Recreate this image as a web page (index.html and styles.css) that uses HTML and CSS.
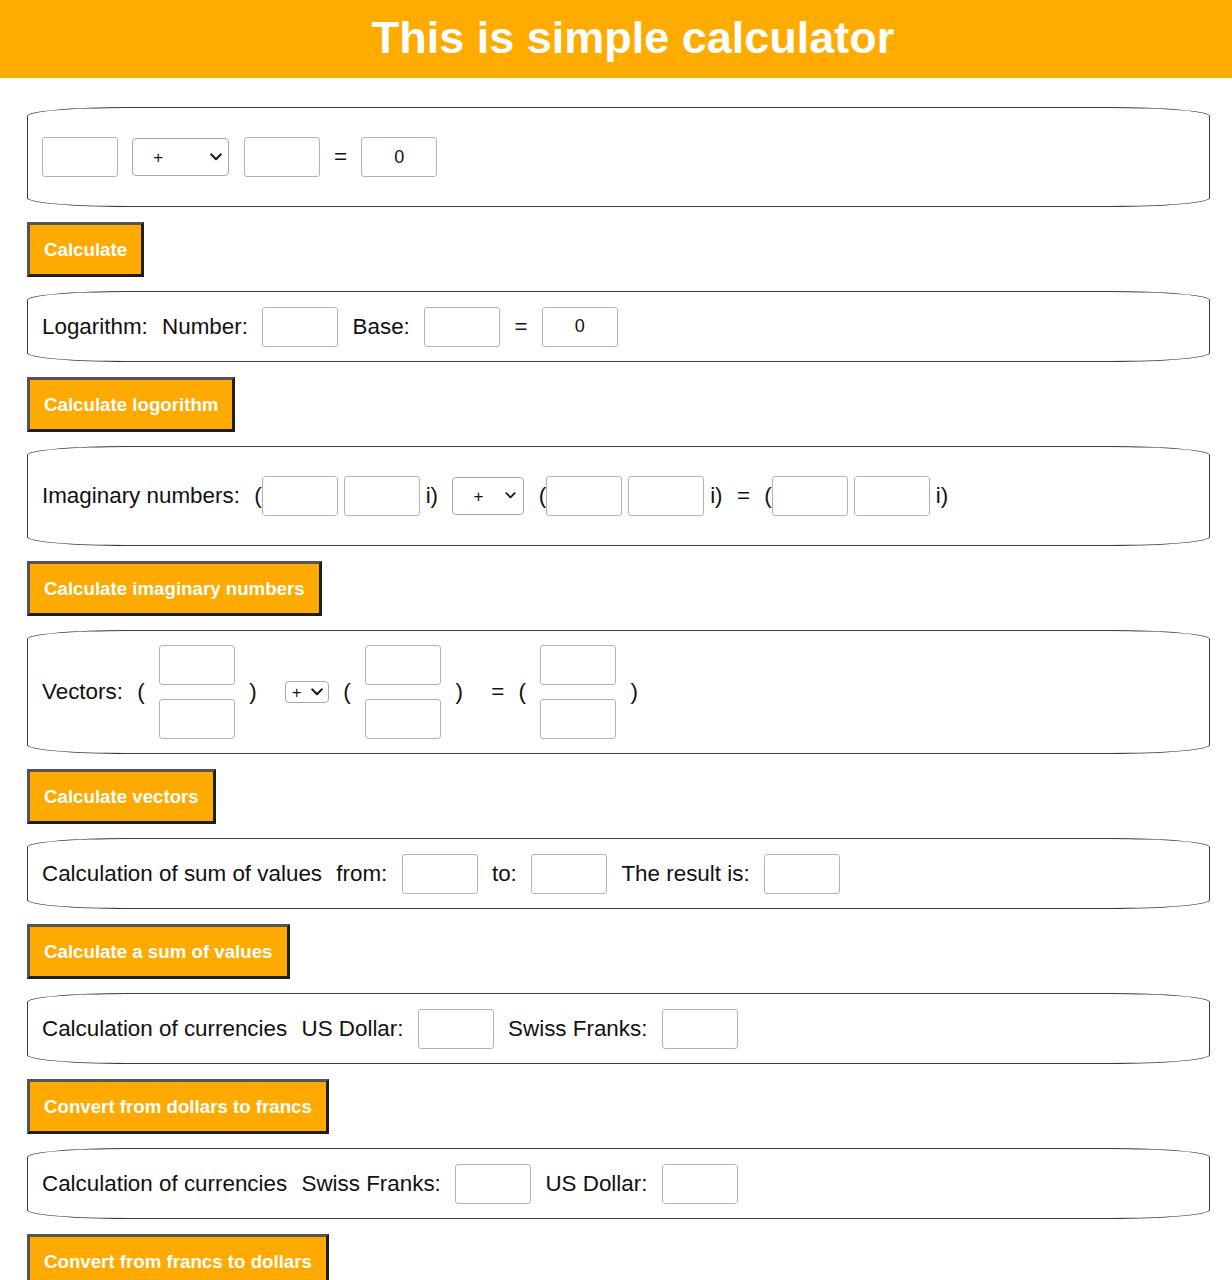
FILE: index.html
```html
<!DOCTYPE html>
<html lang="en">
<head>
<meta charset="utf-8">
<title>This is simple calculator</title>
<link rel="stylesheet" href="styles.css">
</head>
<body>
<header class="top">
  <h1 class="title">This is simple calculator</h1>
</header>
<main class="page">
  <div class="panel panel-tall">
    <input class="field" type="text">
    <span class="sel sel-wide">
      <select class="op"><option>+</option><option>-</option><option>*</option><option>/</option></select>
      <svg class="chev" viewBox="0 0 12 8" aria-hidden="true"><path d="M1.2 1.4 L6 6.2 L10.8 1.4" fill="none" stroke="#111" stroke-width="2" stroke-linecap="round" stroke-linejoin="round"/></svg>
    </span>
    <input class="field" type="text">
    <span class="sym">=</span>
    <input class="field" type="text" value="0">
  </div>
  <button class="btn" type="button">Calculate</button>

  <div class="panel">
    <span>Logarithm:</span>
    <span>Number:</span>
    <input class="field" type="text">
    <span>Base:</span>
    <input class="field" type="text">
    <span class="sym">=</span>
    <input class="field" type="text" value="0">
  </div>
  <button class="btn" type="button">Calculate logorithm</button>

  <div class="panel panel-tall">
    <span class="label-wide">Imaginary numbers:</span>
    <span class="cplx"><span>(</span><input class="field" type="text"><input class="field" type="text"><span>i)</span></span>
    <span class="sel sel-mid">
      <select class="op"><option>+</option><option>-</option><option>*</option><option>/</option></select>
      <svg class="chev" viewBox="0 0 12 8" aria-hidden="true"><path d="M1.2 1.4 L6 6.2 L10.8 1.4" fill="none" stroke="#111" stroke-width="2" stroke-linecap="round" stroke-linejoin="round"/></svg>
    </span>
    <span class="cplx"><span>(</span><input class="field" type="text"><input class="field" type="text"><span>i)</span></span>
    <span class="sym">=</span>
    <span class="cplx"><span>(</span><input class="field" type="text"><input class="field" type="text"><span>i)</span></span>
  </div>
  <button class="btn" type="button">Calculate imaginary numbers</button>

  <div class="panel panel-vec">
    <span>Vectors:</span>
    <span>(</span>
    <span class="stack"><input class="field" type="text"><input class="field" type="text"></span>
    <span class="close">)</span>
    <span class="sel sel-small">
      <select class="op"><option>+</option><option>-</option></select>
      <svg class="chev" viewBox="0 0 12 8" aria-hidden="true"><path d="M1.2 1.4 L6 6.2 L10.8 1.4" fill="none" stroke="#111" stroke-width="2" stroke-linecap="round" stroke-linejoin="round"/></svg>
    </span>
    <span>(</span>
    <span class="stack"><input class="field" type="text"><input class="field" type="text"></span>
    <span class="close">)</span>
    <span class="sym">=</span>
    <span>(</span>
    <span class="stack"><input class="field" type="text"><input class="field" type="text"></span>
    <span>)</span>
  </div>
  <button class="btn" type="button">Calculate vectors</button>

  <div class="panel">
    <span>Calculation of sum of values</span>
    <span>from:</span>
    <input class="field" type="text">
    <span>to:</span>
    <input class="field" type="text">
    <span>The result is:</span>
    <input class="field" type="text">
  </div>
  <button class="btn" type="button">Calculate a sum of values</button>

  <div class="panel">
    <span>Calculation of currencies</span>
    <span>US Dollar:</span>
    <input class="field" type="text">
    <span>Swiss Franks:</span>
    <input class="field" type="text">
  </div>
  <button class="btn" type="button">Convert from dollars to francs</button>

  <div class="panel">
    <span>Calculation of currencies</span>
    <span>Swiss Franks:</span>
    <input class="field" type="text">
    <span>US Dollar:</span>
    <input class="field" type="text">
  </div>
  <button class="btn" type="button">Convert from francs to dollars</button>
</main>
</body>
</html>
```
FILE: styles.css
```css
html, body {
  margin: 0;
  padding: 0;
  background: #ffffff;
}

body {
  font-family: "Liberation Sans", Arial, sans-serif;
  color: #111111;
}

.top {
  background: #ffab00;
  height: 78px;
}

.title {
  margin: 0;
  padding-left: 34px;
  text-align: center;
  color: #ffffff;
  font-size: 45px;
  font-weight: bold;
  line-height: 76px;
}

.page {
  display: flex;
  flex-direction: column;
  align-items: flex-start;
  gap: 14.5px;
  padding: 29px 22px 40px 27px;
}

.panel {
  box-sizing: border-box;
  width: 100%;
  display: flex;
  align-items: center;
  gap: 14.3px;
  padding: 14.5px 14px;
  border: 1px solid #3a3a3a;
  border-radius: 100px / 9px;
  font-size: 22.4px;
  line-height: 26px;
}

.panel-tall {
  padding-top: 29px;
  padding-bottom: 29px;
}

.panel-vec {
  padding-top: 14px;
  padding-bottom: 14px;
}

.field {
  box-sizing: border-box;
  width: 76px;
  height: 40px;
  margin: 0;
  padding: 0 4px;
  border: 1px solid #b4b4b4;
  border-radius: 3px;
  background: #ffffff;
  font-family: "Liberation Sans", Arial, sans-serif;
  font-size: 18px;
  color: #111111;
  text-align: center;
}

.sym {
  display: inline-block;
}

.sel {
  position: relative;
  display: inline-flex;
}

.op {
  -webkit-appearance: none;
  appearance: none;
  box-sizing: border-box;
  width: 100%;
  height: 100%;
  margin: 0;
  border: 1px solid #a8a8a8;
  border-radius: 4px;
  background: #ffffff;
  font-family: "Liberation Sans", Arial, sans-serif;
  font-size: 17px;
  color: #111111;
}

.chev {
  position: absolute;
  pointer-events: none;
  width: 12px;
  height: 8px;
}

.sel-wide {
  width: 97px;
  height: 38px;
}

.sel-wide .op {
  padding: 0 0 0 20px;
}

.sel-wide .chev {
  right: 7px;
  top: 15px;
}

.sel-mid {
  width: 72px;
  height: 38px;
}

.sel-mid .op {
  padding: 0 0 0 20px;
}

.sel-mid .chev {
  right: 8px;
  width: 11px;
  height: 7px;
  top: 15px;
}

.sel-small {
  width: 44px;
  height: 22px;
}

.sel-small .op {
  padding: 0 0 0 6px;
  font-size: 16px;
}

.sel-small .chev {
  right: 6px;
  top: 7px;
  width: 12px;
  height: 8px;
}

.cplx {
  display: flex;
  align-items: center;
  gap: 6px;
}

.cplx > span:first-child {
  margin-right: -6px;
}

.stack {
  display: flex;
  flex-direction: column;
  gap: 14px;
}

.close {
  margin-right: 14px;
}

.btn {
  margin: 0;
  padding: 14px 14px;
  background: #ffaa00;
  color: #ffffff;
  font-family: "Liberation Sans", Arial, sans-serif;
  font-size: 18.7px;
  font-weight: bold;
  line-height: 21px;
  border: 3px solid;
  border-color: #555555 #1e1e1e #1e1e1e #555555;
  cursor: pointer;
}
```
